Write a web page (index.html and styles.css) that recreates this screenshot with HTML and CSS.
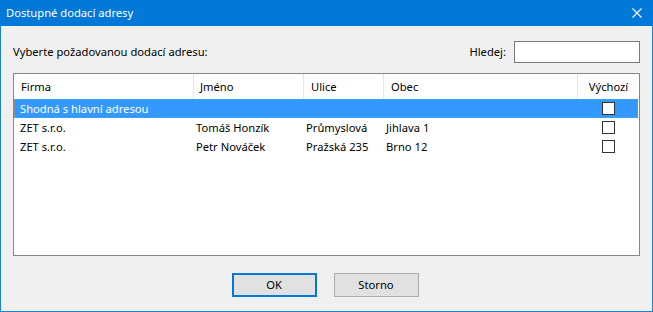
FILE: index.html
```html
<!DOCTYPE html>
<html lang="cs">
<head>
<meta charset="utf-8">
<link rel="stylesheet" href="styles.css">
</head>
<body>
<div class="window">
  <div class="titlebar">
    <span class="title">Dostupné dodací adresy</span>
    <svg class="close" width="10" height="10" viewBox="0 0 10 10"><path d="M0.5 0.5 L9.5 9.5 M9.5 0.5 L0.5 9.5" stroke="#fff" stroke-width="1.1" fill="none"/></svg>
  </div>
  <div class="body">
    <div class="toprow">
      <span class="label">Vyberte požadovanou dodací adresu:</span>
      <div class="search">
        <span class="label">Hledej:</span>
        <div class="input"></div>
      </div>
    </div>
    <div class="list">
      <div class="row header">
        <div class="c c1">Firma</div>
        <div class="c c2">Jméno</div>
        <div class="c c3">Ulice</div>
        <div class="c c4">Obec</div>
        <div class="c c5">Výchozí</div>
      </div>
      <div class="row item selected">
        <div class="c c1">Shodná s hlavní adresou</div>
        <div class="c c2"></div>
        <div class="c c3"></div>
        <div class="c c4"></div>
        <div class="c c5"><span class="check"></span></div>
      </div>
      <div class="row item">
        <div class="c c1">ZET s.r.o.</div>
        <div class="c c2">Tomáš Honzík</div>
        <div class="c c3">Průmyslová</div>
        <div class="c c4">Jihlava 1</div>
        <div class="c c5"><span class="check"></span></div>
      </div>
      <div class="row item">
        <div class="c c1">ZET s.r.o.</div>
        <div class="c c2">Petr Nováček</div>
        <div class="c c3">Pražská 235</div>
        <div class="c c4">Brno 12</div>
        <div class="c c5"><span class="check"></span></div>
      </div>
    </div>
    <div class="buttons">
      <div class="btn default">OK</div>
      <div class="btn">Storno</div>
    </div>
  </div>
</div>
</body>
</html>
```
FILE: styles.css
```css
html, body {
  margin: 0;
  padding: 0;
  background: #f0f0f0;
}
body {
  font-family: "Noto Sans", "DejaVu Sans", sans-serif;
  font-size: 11.2px;
  color: #000;
}
.window {
  width: 653px;
  height: 312px;
  display: flex;
  flex-direction: column;
}
.titlebar {
  height: 26px;
  background: #0078d7;
  color: #fff;
  display: flex;
  align-items: center;
  justify-content: space-between;
  padding: 0 11px 0 6px;
  flex: none;
}
.title {
  line-height: 16px;
}
.close {
  display: block;
}
.body {
  flex: 1;
  border: 1px solid #1883d7;
  border-top: none;
  padding: 15px 12px 0 12px;
  display: flex;
  flex-direction: column;
  background: #f0f0f0;
}
.toprow {
  height: 22px;
  display: flex;
  align-items: center;
  justify-content: space-between;
}
.label {
  line-height: 16px;
}
.search {
  display: flex;
  align-items: center;
  gap: 8px;
}
.input {
  width: 124px;
  height: 20px;
  border: 1px solid #7a7a7a;
  background: #fff;
}
.list {
  margin-top: 10px;
  height: 183px;
  box-sizing: border-box;
  border: 1px solid #828790;
  background: #fff;
}
.row {
  display: flex;
}
.c {
  white-space: nowrap;
  overflow: hidden;
  box-sizing: border-box;
}
.c1 { width: 180px; }
.c2 { width: 110px; }
.c3 { width: 80px; }
.c4 { width: 194px; }
.c5 { flex: 1; text-align: center; }
.header {
  height: 25px;
  align-items: center;
}
.header .c {
  height: 25px;
  line-height: 25px;
  border-right: 1px solid #e5e5e5;
  padding-left: 7px;
}
.header .c1 { padding-left: 7px; }
.header .c2 { padding-left: 6px; }
.header .c5 { border-right: none; padding-left: 0; }
.item {
  height: 19px;
  align-items: center;
}
.item .c {
  line-height: 19px;
  height: 19px;
  padding-left: 2px;
}
.item .c1 { padding-left: 6px; }
.item .c5 { padding-left: 0; display: flex; align-items: center; justify-content: center; }
.selected {
  background: #3399ff;
  color: #fff;
  outline: 1px dotted #d9822b;
  outline-offset: -1px;
  margin-right: 1px;
}
.check {
  display: block;
  width: 11px;
  height: 11px;
  border: 1px solid #333;
  background: #fff;
}
.buttons {
  margin-top: 17px;
  padding-right: 3px;
  display: flex;
  justify-content: center;
  gap: 17px;
}
.btn {
  width: 83px;
  height: 22px;
  border: 1px solid #adadad;
  background: #e1e1e1;
  text-align: center;
  line-height: 22px;
}
.btn.default {
  width: 81px;
  height: 20px;
  line-height: 20px;
  border: 2px solid #0078d7;
}
```
